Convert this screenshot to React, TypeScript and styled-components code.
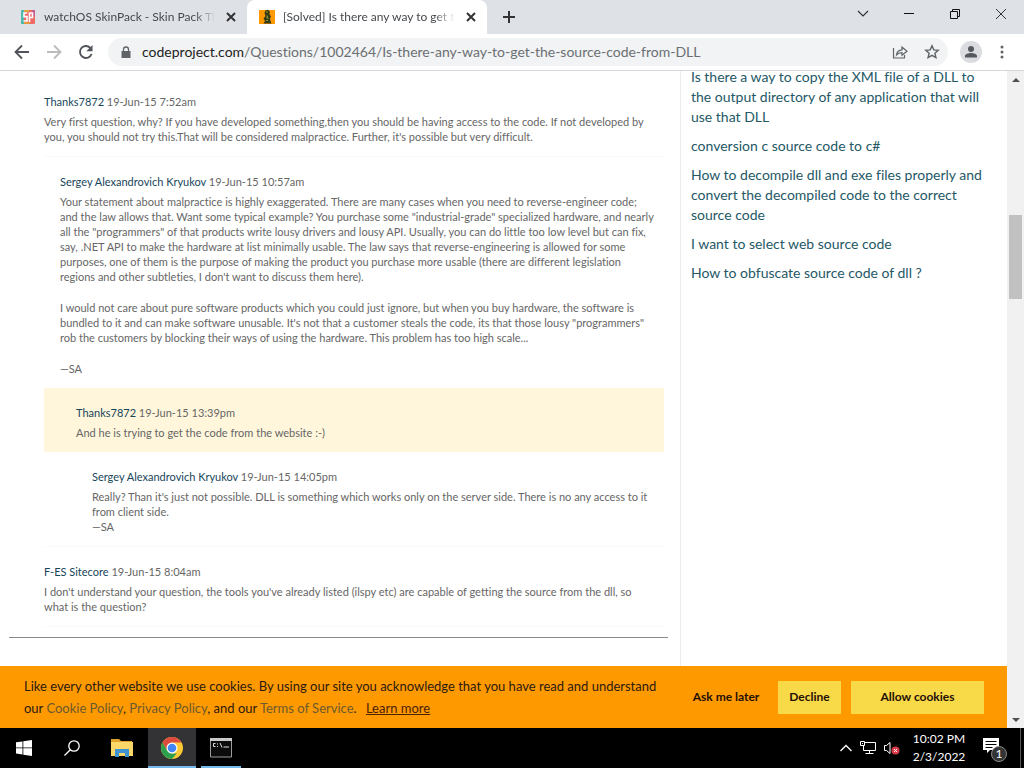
import React from "react";
import styled, { createGlobalStyle } from "styled-components";

const ui = `"Segoe UI", Lato, "Open Sans", sans-serif`;

const GlobalStyle = createGlobalStyle`
  *, *::before, *::after { box-sizing: border-box; }
  body { margin: 0; font-family: ${ui}; font-variant-ligatures: none; background: #fff; }
  a { text-decoration: none; color: inherit; }
  button { font: inherit; border: 0; padding: 0; background: none; color: inherit; }
  p { margin: 0; }
  svg { display: block; flex: none; }
`;

const Screen = styled.div`
  height: 100vh;
  display: grid;
  grid-template-columns: minmax(0, 1fr);
  grid-template-rows: 34px 37px minmax(0, 1fr) 40px;
  overflow: hidden;
`;

/* ---------- browser frame ---------- */

const TabStrip = styled.header`
  display: flex;
  background: #dee1e6;
`;

const Tab = styled.div<{ $active?: boolean }>`
  display: flex;
  align-items: center;
  gap: 8px;
  width: ${(p) => (p.$active ? 240 : 247)}px;
  padding: 0 8px 0 ${(p) => (p.$active ? 12 : 20)}px;
  background: ${(p) => (p.$active ? "#fff" : "transparent")};
  border-radius: 8px 8px 0 0;
  color: #45494d;
`;

const TabTitle = styled.span`
  flex: 1;
  min-width: 0;
  overflow: hidden;
  white-space: nowrap;
  font-size: 12px;
  line-height: 16px;
  mask-image: linear-gradient(to right, #000 88%, transparent);
`;

const IconButton = styled.button<{ $w?: number }>`
  display: grid;
  place-items: center;
  width: ${(p) => p.$w ?? 16}px;
  color: #333;
`;

const WindowControls = styled.div`
  display: flex;
  margin-left: auto;
  padding-bottom: 6px;
`;

const Toolbar = styled.nav`
  display: flex;
  align-items: center;
  padding: 0 2px 0 6px;
  border-bottom: 1px solid #d5d7da;
  background: #fff;
  color: #5f6368;
`;

const AddressBar = styled.div`
  flex: 1;
  min-width: 0;
  display: flex;
  align-items: center;
  height: 28px;
  margin: 0 12px 0 6px;
  padding-left: 13px;
  border-radius: 14px;
  background: #f1f3f4;
`;

const AddressField = styled.div`
  flex: 1;
  display: flex;
  align-items: center;
  gap: 11px;
  min-width: 0;
`;

const Url = styled.span`
  color: #6b6f73;
  font-size: 14px;
  line-height: 20px;
  white-space: nowrap;
  b { font-weight: 400; color: #222; }
`;

const Avatar = styled.button`
  && {
    display: grid;
    place-items: center;
    width: 22px;
    height: 22px;
    border-radius: 50%;
    background: #dadce0;
    color: #55595e;
  }
`;

/* ---------- page ---------- */

const Viewport = styled.div`
  display: grid;
  grid-template-columns: minmax(0, 1fr) 17px;
`;

const Page = styled.div`
  min-height: 0;
  display: grid;
  grid-template-columns: minmax(0, 1fr);
  grid-template-rows: minmax(0, 1fr) auto;
`;

const Columns = styled.div`
  display: grid;
  grid-template-columns: minmax(0, 1fr) 327px;
  overflow: hidden;
`;

const Discussion = styled.main`
  min-width: 0;
  padding: 6px 12px 0 9px;
`;

const Thread = styled.section`
  padding: 0 4px 10px 35px;
`;

const Comment = styled.article<{ $level?: number; $ruled?: boolean; $own?: boolean }>`
  padding: 17px 0 12px ${(p) => (p.$level ?? 0) * 16}px;
  border-bottom: ${(p) => (p.$ruled ? "1px solid #fafafa" : "0")};
  background: ${(p) => (p.$own ? "#fff6dc" : "transparent")};
  color: #666;
  font-size: 11px;
  line-height: 15px;
`;

const Byline = styled.div`
  margin-bottom: 5px;
  a { color: #17465a; }
`;

const Body = styled.div`
  display: grid;
  gap: 16px;
  p { white-space: pre; }
`;

const Rule = styled.hr`
  margin: 0;
  border: 0;
  border-top: 1px solid #8a8a8a;
`;

const Related = styled.aside`
  border-left: 1px solid #ececec;
  padding-left: 10px;
  overflow: hidden;
`;

const RelatedList = styled.ul`
  display: grid;
  gap: 9px;
  margin: -4px 0 0;
  padding: 0;
  list-style: none;
  color: #245866;
  font-size: 14px;
  line-height: 20px;
  white-space: pre;
`;

const CookieBar = styled.section`
  display: flex;
  align-items: center;
  gap: 10px;
  height: 62px;
  padding: 0 23px 0 24px;
  background: #ff9900;
  color: #2b1a10;
  font-size: 13px;
  line-height: 22px;
`;

const CookieText = styled.p`
  flex: 1;
  min-width: 0;
  white-space: pre;
  a { color: #6b5a2e; }
  a:last-child { margin-left: 6px; color: #4a2208; text-decoration: underline; }
`;

const CookieButton = styled.button<{ $w: number; $plain?: boolean }>`
  && {
    flex: none;
    width: ${(p) => p.$w}px;
    height: 33px;
    background: ${(p) => (p.$plain ? "transparent" : "#f8d948")};
    color: #1f1005;
    font-size: 12px;
    font-weight: 700;
  }
`;

const ScrollBar = styled.div`
  display: flex;
  flex-direction: column;
  align-items: center;
  padding: 7px 0 6px;
  background: #f1f1f1;
  color: #505050;
`;

const Thumb = styled.div`
  width: 13px;
  height: 84px;
  margin: 133px 0 auto;
  background: #c1c1c1;
`;

/* ---------- taskbar ---------- */

const Taskbar = styled.footer`
  display: flex;
  align-items: stretch;
  background: #000;
  color: #fff;
`;

const TaskButton = styled.button<{ $state?: "open" | "focused" }>`
  && {
    display: grid;
    place-items: center;
    width: ${(p) => (p.$state === "open" ? 40 : 48)}px;
    margin-left: ${(p) => (p.$state === "open" ? 5 : p.$state ? 4 : 0)}px;
    background: ${(p) => (p.$state === "focused" ? "#333336" : "transparent")};
    box-shadow: ${(p) => (p.$state ? "inset 0 -2px #76b9ed" : "none")};
  }
`;

const FolderButton = styled(TaskButton)`
  && { padding-left: 4px; }
`;

const Tray = styled.div`
  display: flex;
  align-items: center;
  gap: 8px;
  margin-left: auto;
`;

const Clock = styled.time`
  width: 58px;
  margin-left: 2px;
  text-align: center;
  font-size: 12px;
  line-height: 18px;
  white-space: nowrap;
`;

const Notices = styled.button`
  && {
    display: flex;
    align-items: center;
    margin-left: 7px;
    height: 40px;
    padding: 4px 12px 0 0;
    border-right: 1px solid #555;
    margin-right: 3px;
  }
`;

/* ---------- icons ---------- */

const Cross = ({ size = 8, w = 1 }: { size?: number; w?: number }) => (
  <svg width={size + 2} height={size + 2} viewBox={`-1 -1 ${size + 2} ${size + 2}`} stroke="currentColor" strokeWidth={w}>
    <path d={`M0 0L${size} ${size}M${size} 0L0 ${size}`} />
  </svg>
);

const SkinPackIcon = () => (
  <svg width="16" height="16" viewBox="0 0 16 16">
    <rect x="1" y="1" width="14" height="14" rx="1" fill="#ee6a66" />
    <path d="M1 1h3v14H1z" fill="#4fb9ae" />
    <path d="M4 1h5v2H4z" fill="#e0a33e" />
    <path d="M12 1h3v6h-3z" fill="#c95a90" />
    <path d="M4 13h6v2H4z" fill="#e8983c" />
    <path d="M7.300 4H4v3.600h3V12H3.500M9.500 13V4h3v4.500H9.500" fill="none" stroke="#fff" strokeWidth="1.600" />
  </svg>
);

const BobIcon = () => (
  <svg width="16" height="16" viewBox="0 0 16 16">
    <path d="M0 1h16v14H0z" fill="#f90" />
    <path d="M6.500 1.500l2.500-.8 2 2-.6 2.300 1.600 2.500-1 2 .5 2.500 1 2.500H4.500L6 12 4.500 9.500l2-2.500L5.500 4z" fill="#353914" />
    <path d="M7 3h2M8.500 6.500l-.5 2 1.500 1M7 11.500h2" fill="none" stroke="#8f9a3c" strokeWidth="1.200" />
  </svg>
);

const Arrow = ({ back }: { back?: boolean }) => (
  <svg width="16" height="16" viewBox="0 0 16 16" fill="none" stroke={back ? "#50545a" : "#babcbe"} strokeWidth="1.800">
    {back ? <path d="M15 8H2M8 1.500L1.500 8 8 14.500" /> : <path d="M1 8h13M8 1.500L14.500 8 8 14.500" />}
  </svg>
);

const ReloadIcon = () => (
  <svg width="16" height="16" viewBox="0 0 16 16">
    <path d="M13.600 10A6 6 0 1 1 12.300 3.800" fill="none" stroke="#50545a" strokeWidth="1.900" />
    <path d="M14.500 1v6.200H8.300z" fill="#50545a" />
  </svg>
);

const LockIcon = () => (
  <svg width="10" height="13" viewBox="0 0 10 13">
    <path d="M0.500 5h9v7h-9z" fill="#5f6368" />
    <path d="M2.500 5.500V3.500a2.500 2.500 0 0 1 5 0v2" fill="none" stroke="#5f6368" strokeWidth="1.300" />
  </svg>
);

const ShareIcon = () => (
  <svg width="16" height="16" viewBox="0 0 16 16" fill="none" stroke="#5f6368" strokeWidth="1.200">
    <path d="M1.500 4v10h11v-3" />
    <path d="M4.500 11c.4-3.300 2.200-5 5.500-5.200V3l5 4.300-5 4V8.600c-2.500 0-4.200.7-5.500 2.400z" />
  </svg>
);

const StarIcon = () => (
  <svg width="16" height="16" viewBox="0 0 16 16" fill="none" stroke="#5f6368" strokeWidth="1.400">
    <path d="M8 1.800l1.800 4.100 4.400.4-3.300 2.900 1 4.400L8 11.300l-3.900 2.300 1-4.400L1.800 6.300l4.400-.4z" />
  </svg>
);

const PersonIcon = () => (
  <svg width="14" height="14" viewBox="0 0 14 14" fill="currentColor">
    <circle cx="7" cy="4" r="3" />
    <path d="M1 12.500V11c0-2 3.500-3 6-3s6 1 6 3v1.500z" />
  </svg>
);

const DotsIcon = () => (
  <svg width="4" height="14" viewBox="0 0 4 14" fill="#5f6368">
    <circle cx="2" cy="2" r="1.500" /><circle cx="2" cy="7" r="1.500" /><circle cx="2" cy="12" r="1.500" />
  </svg>
);

const Triangle = ({ down }: { down?: boolean }) => (
  <svg width="8" height="4" viewBox="0 0 8 4" fill="currentColor">
    <path d={down ? "M0 0h8L4 4z" : "M0 4h8L4 0z"} />
  </svg>
);

const WindowsIcon = () => (
  <svg width="16" height="16" viewBox="0 0 16 16" fill="#fff">
    <path d="M0 2.300L6.500 1.400v6.100H0zM7.300 1.300L16 0v7.500H7.300zM0 8.300h6.500v6.200L0 13.600zM7.300 8.300H16V16l-8.700-1.300z" />
  </svg>
);

const SearchIcon = () => (
  <svg width="16" height="16" viewBox="0 0 16 16" fill="none" stroke="#fff" strokeWidth="1.300">
    <circle cx="10" cy="6" r="5.200" /><path d="M6.300 9.700L.5 15.500" />
  </svg>
);

const FolderIcon = () => (
  <svg width="22" height="18" viewBox="0 0 22 18">
    <path d="M0 0h8l2 2h11v5H0z" fill="#e0a32e" />
    <path d="M0 3h22v14H0z" fill="#fbd76a" />
    <path d="M4 18v-8h14v8h-4v-4H8v4z" fill="#3f93d2" />
  </svg>
);

const ChromeIcon = () => (
  <svg width="24" height="24" viewBox="0 0 24 24">
    <circle cx="12" cy="12" r="11" fill="#fcc934" />
    <path d="M2.500 6.500A11 11 0 0 1 21.500 6.500H12l-4.800 8.200z" fill="#dd4b3e" />
    <path d="M2.500 6.500l4.700 8.200L12 17.500h4.800L12 23A11 11 0 0 1 2.500 6.500z" fill="#2da04e" />
    <circle cx="12" cy="12" r="5.500" fill="#fff" />
    <circle cx="12" cy="12" r="4.300" fill="#4285f4" />
  </svg>
);

const ConsoleIcon = () => (
  <svg width="22" height="20" viewBox="0 0 22 20">
    <path d="M.5.500h21v18.500H.5z" fill="#0c0c0c" stroke="#9b9b9b" />
    <path d="M0 0h22v3H0z" fill="#c9c9c9" />
    <path d="M5.500 5.500H3.500v3h2M7.500 5.500v1M7.500 8v1M10 5l2 4.500M13.500 9H19" fill="none" stroke="#ddd" />
  </svg>
);

const NetworkIcon = () => (
  <svg width="16" height="14" viewBox="0 0 16 14" fill="none" stroke="#fff">
    <path d="M5 1.500h10.500v8H3.500V5M.5.500h4v4h-4zM2 2.500h1M9.500 9.500v3M5.500 12.500h8" />
  </svg>
);

const SpeakerIcon = () => (
  <svg width="16" height="14" viewBox="0 0 16 14" fill="none">
    <path d="M.5 4.500h2l3.500-3v11l-3.500-3h-2z" stroke="#fff" />
    <circle cx="11.500" cy="9.500" r="4" fill="#d93a48" />
    <path d="M10 8l3 3M13 8l-3 3" stroke="#fff" />
  </svg>
);

const NoticeIcon = () => (
  <svg width="25" height="26" viewBox="0 0 25 26">
    <path d="M0 1h16v12H7l-3 3v-3H0z" fill="#fff" />
    <path d="M2.500 4.500h11M2.500 7.500h11M2.500 10.500h7" stroke="#000" />
    <circle cx="16" cy="17" r="7.500" fill="#333" stroke="#888" />
    <text x="16" y="21" fill="#fff" fontSize="12" textAnchor="middle">1</text>
  </svg>
);

/* ---------- content ---------- */

type Entry = { author: string; date: string; level?: number; ruled?: boolean; own?: boolean; body: string[] };

const comments: Entry[] = [
  {
    author: "Thanks7872", date: "19-Jun-15 7:52am", ruled: true,
    body: ["Very first question, why? If you have developed something,then you should be having access to the code. If not developed by\nyou, you should not try this.That will be considered malpractice. Further, it's possible but very difficult."],
  },
  {
    author: "Sergey Alexandrovich Kryukov", date: "19-Jun-15 10:57am", level: 1,
    body: [
      "Your statement about malpractice is highly exaggerated. There are many cases when you need to reverse-engineer code;\nand the law allows that. Want some typical example? You purchase some \"industrial-grade\" specialized hardware, and nearly\nall the \"programmers\" of that products write lousy drivers and lousy API. Usually, you can do little too low level but can fix,\nsay, .NET API to make the hardware at list minimally usable. The law says that reverse-engineering is allowed for some\npurposes, one of them is the purpose of making the product you purchase more usable (there are different legislation\nregions and other subtleties, I don't want to discuss them here).",
      "I would not care about pure software products which you could just ignore, but when you buy hardware, the software is\nbundled to it and can make software unusable. It's not that a customer steals the code, its that those lousy \"programmers\"\nrob the customers by blocking their ways of using the hardware. This problem has too high scale...",
      "—SA",
    ],
  },
  { author: "Thanks7872", date: "19-Jun-15 13:39pm", level: 2, own: true, body: ["And he is trying to get the code from the website :-)"] },
  {
    author: "Sergey Alexandrovich Kryukov", date: "19-Jun-15 14:05pm", level: 3, ruled: true,
    body: ["Really? Than it's just not possible. DLL is something which works only on the server side. There is no any access to it\nfrom client side.\n—SA"],
  },
  {
    author: "F-ES Sitecore", date: "19-Jun-15 8:04am", ruled: true,
    body: ["I don't understand your question, the tools you've already listed (ilspy etc) are capable of getting the source from the dll, so\nwhat is the question?"],
  },
];

const related = [
  "Is there a way to copy the XML file of a DLL to\nthe output directory of any application that will\nuse that DLL",
  "conversion c source code to c#",
  "How to decompile dll and exe files properly and\nconvert the decompiled code to the correct\nsource code",
  "I want to select web source code",
  "How to obfuscate source code of dll ?",
];

export default function App() {
  return (
    <Screen>
      <GlobalStyle />
      <TabStrip>
        <Tab>
          <SkinPackIcon />
          <TabTitle>watchOS SkinPack - Skin Pack The</TabTitle>
          <IconButton aria-label="Close tab"><Cross w={2} /></IconButton>
        </Tab>
        <Tab $active>
          <BobIcon />
          <TabTitle>[Solved] Is there any way to get t</TabTitle>
          <IconButton aria-label="Close tab"><Cross w={2} /></IconButton>
        </Tab>
        <IconButton $w={44} aria-label="New tab">
          <svg width="12" height="12" viewBox="0 0 12 12" stroke="#333" strokeWidth="2"><path d="M6 0v12M0 6h12" /></svg>
        </IconButton>
        <WindowControls>
          <IconButton $w={46} aria-label="Search tabs">
            <svg width="12" height="8" viewBox="0 0 12 8" fill="none" stroke="#333" strokeWidth="1.200"><path d="M1 1l5 5 5-5" /></svg>
          </IconButton>
          <IconButton $w={46} aria-label="Minimize">
            <svg width="10" height="2" viewBox="0 0 10 2"><path d="M0 0h10v1H0z" fill="#111" /></svg>
          </IconButton>
          <IconButton $w={46} aria-label="Restore">
            <svg width="10" height="10" viewBox="0 0 10 10" fill="none" stroke="#111"><path d="M.5 2.500h7v7h-7zM2.500 2.500v-2h7v7h-2" /></svg>
          </IconButton>
          <IconButton $w={46} aria-label="Close"><Cross size={10} /></IconButton>
        </WindowControls>
      </TabStrip>

      <Toolbar>
        <IconButton $w={32} aria-label="Back"><Arrow back /></IconButton>
        <IconButton $w={32} aria-label="Forward"><Arrow /></IconButton>
        <IconButton $w={32} aria-label="Reload"><ReloadIcon /></IconButton>
        <AddressBar>
          <AddressField>
            <LockIcon />
            <Url><b>codeproject.com</b>/Questions/1002464/Is-there-any-way-to-get-the-source-code-from-DLL</Url>
          </AddressField>
          <IconButton $w={32} aria-label="Share"><ShareIcon /></IconButton>
          <IconButton $w={32} aria-label="Bookmark"><StarIcon /></IconButton>
        </AddressBar>
        <Avatar aria-label="Profile"><PersonIcon /></Avatar>
        <IconButton $w={40} aria-label="Menu"><DotsIcon /></IconButton>
      </Toolbar>

      <Viewport>
        <Page>
          <Columns>
            <Discussion>
              <Thread>
                {comments.map((c) => (
                  <Comment key={c.date} $level={c.level} $ruled={c.ruled} $own={c.own}>
                    <Byline><a href="#member">{c.author}</a> {c.date}</Byline>
                    <Body>{c.body.map((t) => <p key={t}>{t}</p>)}</Body>
                  </Comment>
                ))}
              </Thread>
              <Rule />
            </Discussion>
            <Related>
              <RelatedList>
                {related.map((t) => <li key={t}><a href="#question">{t}</a></li>)}
              </RelatedList>
            </Related>
          </Columns>
          <CookieBar aria-label="Cookie notice">
            <CookieText>
              Like every other website we use cookies. By using our site you acknowledge that you have read and understand{"\n"}
              our <a href="#cookie">Cookie Policy</a>, <a href="#privacy">Privacy Policy</a>, and our <a href="#terms">Terms of Service</a>. <a href="#more">Learn more</a>
            </CookieText>
            <CookieButton $w={84} $plain>Ask me later</CookieButton>
            <CookieButton $w={63}>Decline</CookieButton>
            <CookieButton $w={133}>Allow cookies</CookieButton>
          </CookieBar>
        </Page>
        <ScrollBar>
          <Triangle />
          <Thumb />
          <Triangle down />
        </ScrollBar>
      </Viewport>

      <Taskbar>
        <TaskButton aria-label="Start"><WindowsIcon /></TaskButton>
        <TaskButton aria-label="Search"><SearchIcon /></TaskButton>
        <FolderButton aria-label="File Explorer"><FolderIcon /></FolderButton>
        <TaskButton $state="focused" aria-label="Chrome"><ChromeIcon /></TaskButton>
        <TaskButton $state="open" aria-label="Command Prompt"><ConsoleIcon /></TaskButton>
        <Tray>
          <svg width="12" height="8" viewBox="0 0 12 8" fill="none" stroke="#fff" strokeWidth="1.300"><path d="M.5 7L6 1.500 11.500 7" /></svg>
          <NetworkIcon />
          <SpeakerIcon />
          <Clock>10:02 PM<br />2/3/2022</Clock>
          <Notices aria-label="Notifications"><NoticeIcon /></Notices>
        </Tray>
      </Taskbar>
    </Screen>
  );
}
